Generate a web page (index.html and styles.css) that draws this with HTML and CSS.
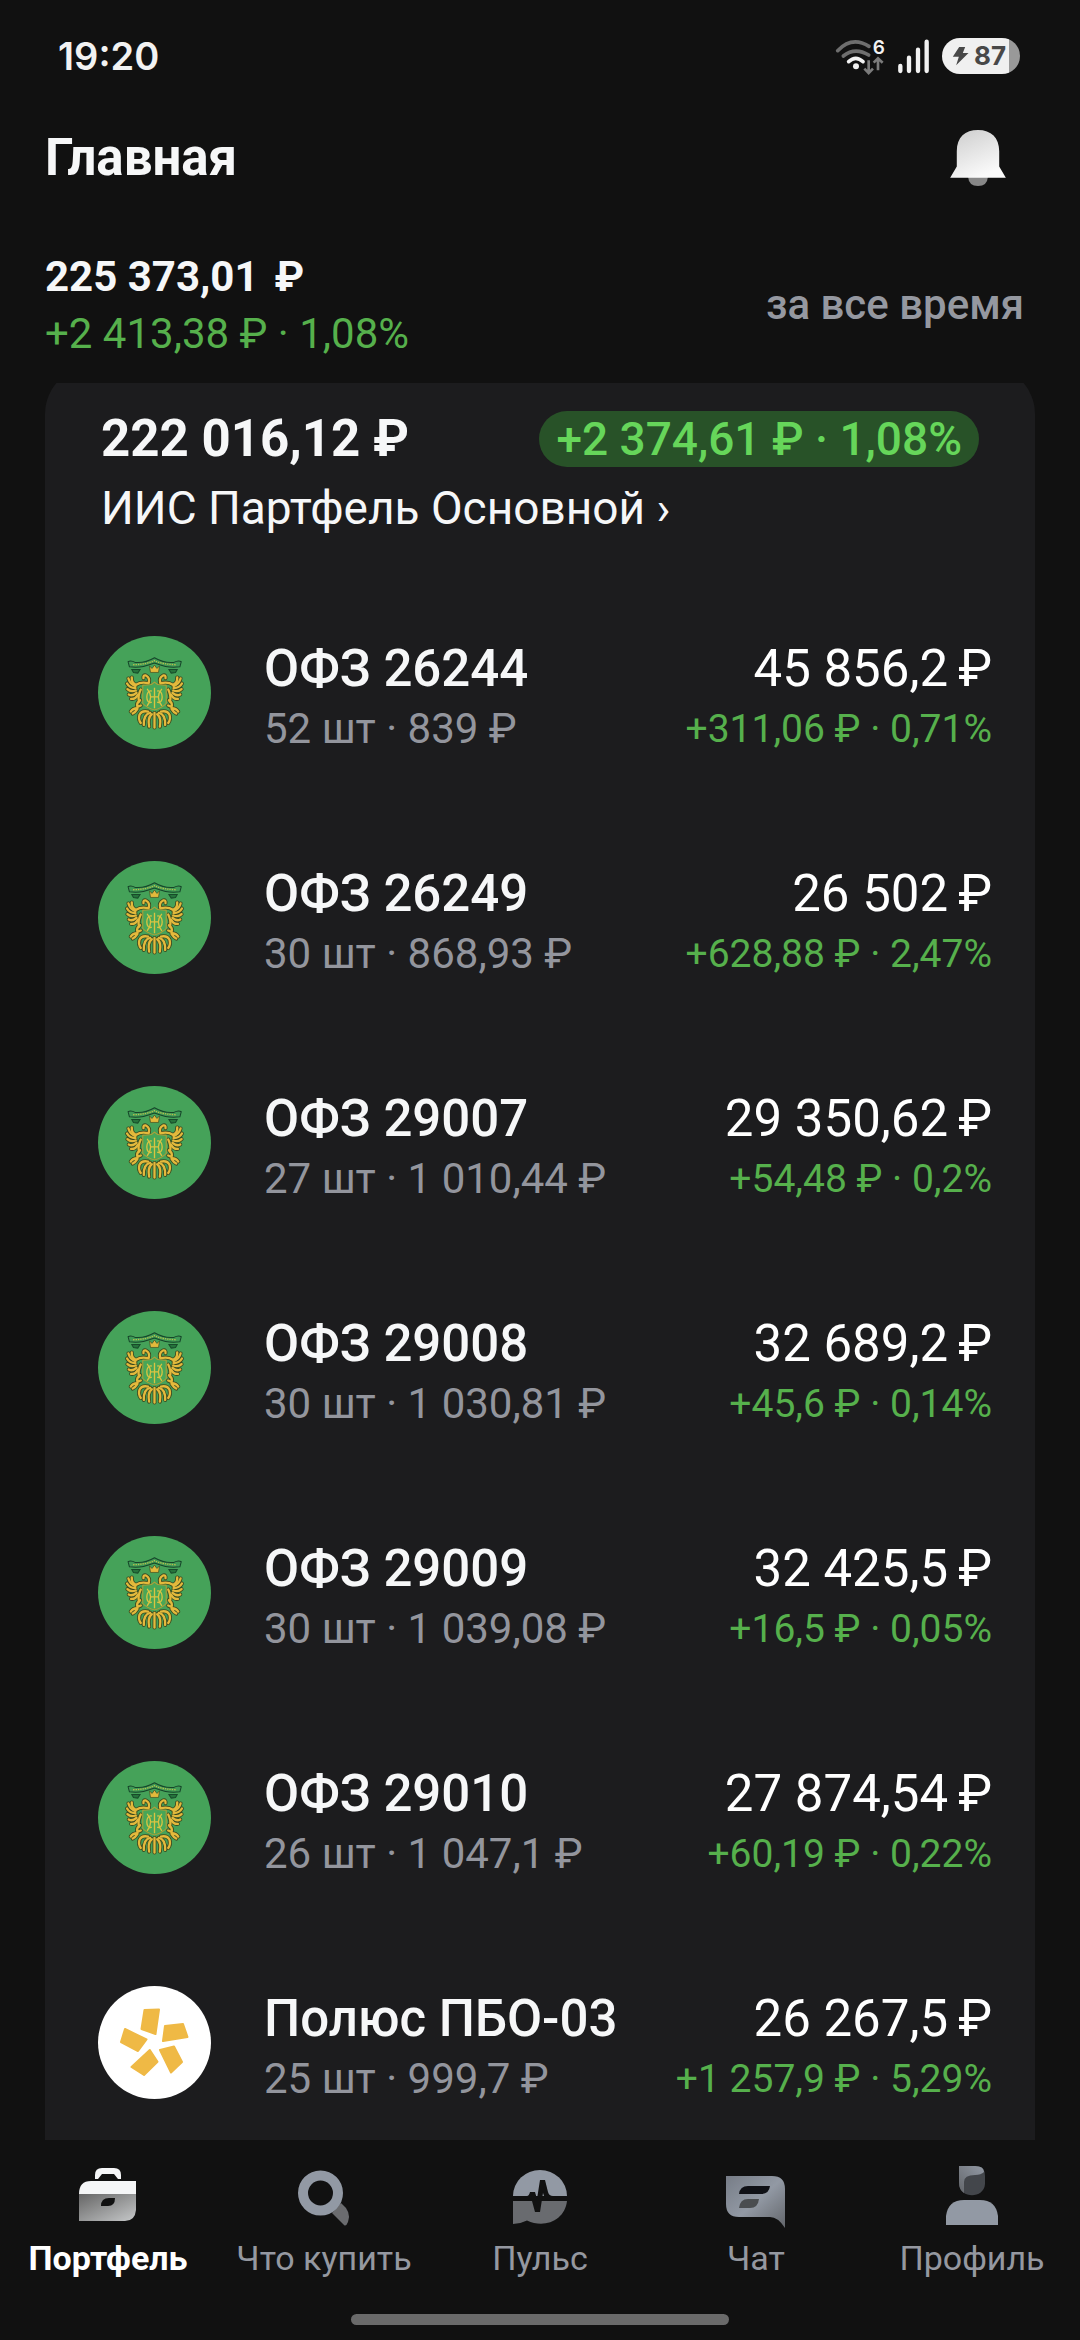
FILE: index.html
```html
<!DOCTYPE html>
<html lang="ru">
<head>
<meta charset="utf-8">
<meta name="viewport" content="width=device-width, initial-scale=1">
<title>Главная</title>
<link rel="stylesheet" href="styles.css">
</head>
<body>
<svg class="defs" aria-hidden="true">
  <symbol id="wing" viewBox="0 0 338 338" overflow="visible">
    <g fill="none" stroke-linecap="round">
      <path d="M150 141 Q128 136 114 146 Q100 142 101 124"/>
      <path d="M112 150 Q96 144 91 127"/>
      <path d="M112 156 Q94 155 87 142"/>
      <path d="M113 163 Q97 168 88 159"/>
      <path d="M115 170 Q103 181 92 175"/>
      <path d="M119 176 Q111 190 99 188"/>
      <path d="M128 160 Q118 180 123 196"/>
      <path d="M152 140 Q156 124 143 118 Q135 116 136 126"/>
      <path d="M126 192 Q114 200 118 212 L128 208"/>
      <path d="M118 216 Q104 216 98 226 M118 218 Q112 228 104 232"/>
      <path d="M150 226 Q130 222 124 236 Q120 250 128 260"/>
      <path d="M156 230 Q136 234 137 266"/>
      <path d="M161 234 Q148 244 153 271"/>
    </g>
  </symbol>
  <symbol id="emblem" viewBox="0 0 338 338">
    <circle cx="169" cy="169" r="169" fill="#45a259"/>
    <path d="M90 77 Q98 71 111 79 Q140 82 169 65 Q198 82 227 79 Q241 71 249 77 L245 92 Q222 95 202 91 Q183 87 169 81 Q154 87 136 91 Q116 95 94 92Z" fill="#3f9a55" stroke="#16452a" stroke-width="3"/>
    <path d="M105 86 Q142 85 169 74 Q195 85 234 86" fill="none" stroke="#b9bd4c" stroke-width="4" stroke-dasharray="4 3"/>
    <path d="M101 100 H126 L119 111 L106 109Z M237 100 H212 L219 111 L232 109Z" fill="#26743c" stroke="#174b2a" stroke-width="3"/>
    <g stroke="#3b4a20" stroke-width="12">
      <use href="#wing" width="338" height="338"/>
      <use href="#wing" width="338" height="338" transform="translate(338 0) scale(-1 1)"/>
      <path d="M169 230 V274" stroke-linecap="round"/>
    </g>
    <g stroke="#e3b93c" stroke-width="7">
      <use href="#wing" width="338" height="338"/>
      <use href="#wing" width="338" height="338" transform="translate(338 0) scale(-1 1)"/>
      <path d="M169 230 V274" stroke-linecap="round"/>
    </g>
    <path d="M157 109 L154 90 L162 97 L169 87 L176 97 L184 90 L181 109Z" fill="#e3b93c" stroke="#3b4a20" stroke-width="2"/>
    <path d="M134 147 L160 145 L169 138 L178 145 L204 147 V202 Q191 216 169 221 Q147 216 134 202Z" fill="#48a657" stroke="#b59e35" stroke-width="3"/>
    <g fill="none" stroke="#d8c442" stroke-width="4">
      <path d="M169 155 V216 M156 182 H182"/>
      <path d="M161 165 C141 158 141 207 161 198 M177 165 C197 158 197 207 177 198 M147 158 Q168 182 147 209 M191 158 Q170 182 191 209"/>
    </g>
  </symbol>
</svg>

<header class="status">
  <time class="clock">19:20</time>
  <div class="status-icons">
    <svg class="wifi" viewBox="110 50 150 111" aria-label="Wi-Fi">
      <g fill="none" stroke-width="11" stroke-linecap="round">
        <path d="M118 88 Q161 43 212 75" stroke="#6e6e6e"/>
        <path d="M135 104 Q170 76 211 101" stroke="#6e6e6e"/>
        <path d="M151 121 Q172 101 194 121" stroke="#f2f2f2"/>
      </g>
      <circle cx="173" cy="135" r="9" fill="#f2f2f2"/>
      <path d="M211 117 V154 M198 142 L211 155 L224 142 M239 147 V112 M226 124 L239 111 L253 124" fill="none" stroke="#7b7b7b" stroke-width="8"/>
      <text class="wifi-gen" x="223" y="98">6</text>
    </svg>
    <svg class="signal" viewBox="288 54 99 105" aria-label="Сигнал">
      <path d="M298 135 V150 M324 110 V150 M351 86 V150 M377 62 V150" stroke="#f2f2f2" stroke-width="13" stroke-linecap="round"/>
    </svg>
    <div class="battery">
      <svg class="bolt" viewBox="455 78 50 60" aria-hidden="true"><path d="M476 81 H494 L487 99 H504 L467 136 L475 110 H457Z" fill="#484848"/></svg>
      <span>87</span>
    </div>
  </div>
</header>

<section class="title-bar">
  <h1>Главная</h1>
  <button class="bell" type="button" aria-label="Уведомления">
    <svg viewBox="450 326 168 169">
      <defs><linearGradient id="bellFill" x1="0" y1="0" x2=".5" y2="1"><stop offset="0" stop-color="#ccc"/><stop offset="1" stop-color="#fafafa"/></linearGradient></defs>
      <path d="M504 467 H564 Q562 495 534 495 Q506 495 504 467Z" fill="#888"/>
      <path d="M470 390 C470 347 495 326 534 326 C574 326 598 349 598 390 V436 L618 470 H450 L470 436Z" fill="url(#bellFill)"/>
    </svg>
  </button>
</section>

<section class="summary">
  <div>
    <p class="total">225 373,01<span>₽</span></p>
    <p class="total-gain">+2 413,38 ₽ · 1,08%</p>
  </div>
  <button class="period" type="button">за все время</button>
</section>

<main class="feed">
  <article class="card">
    <header class="account">
      <div class="account-top">
        <h2>222 016,12 ₽</h2>
        <span class="pill">+2 374,61 ₽ · 1,08%</span>
      </div>
      <a class="account-name" href="#account">ИИС Партфель Основной ›</a>
    </header>
    <ul class="assets">
      <li class="asset">
        <svg class="avatar"><use href="#emblem"/></svg>
        <div class="info"><h3>ОФЗ 26244</h3><p>52 шт · 839 ₽</p></div>
        <div class="value"><strong>45 856,2<span>₽</span></strong><p>+311,06 ₽ · 0,71%</p></div>
      </li>
      <li class="asset">
        <svg class="avatar"><use href="#emblem"/></svg>
        <div class="info"><h3>ОФЗ 26249</h3><p>30 шт · 868,93 ₽</p></div>
        <div class="value"><strong>26 502<span>₽</span></strong><p>+628,88 ₽ · 2,47%</p></div>
      </li>
      <li class="asset">
        <svg class="avatar"><use href="#emblem"/></svg>
        <div class="info"><h3>ОФЗ 29007</h3><p>27 шт · 1 010,44 ₽</p></div>
        <div class="value"><strong>29 350,62<span>₽</span></strong><p>+54,48 ₽ · 0,2%</p></div>
      </li>
      <li class="asset">
        <svg class="avatar"><use href="#emblem"/></svg>
        <div class="info"><h3>ОФЗ 29008</h3><p>30 шт · 1 030,81 ₽</p></div>
        <div class="value"><strong>32 689,2<span>₽</span></strong><p>+45,6 ₽ · 0,14%</p></div>
      </li>
      <li class="asset">
        <svg class="avatar"><use href="#emblem"/></svg>
        <div class="info"><h3>ОФЗ 29009</h3><p>30 шт · 1 039,08 ₽</p></div>
        <div class="value"><strong>32 425,5<span>₽</span></strong><p>+16,5 ₽ · 0,05%</p></div>
      </li>
      <li class="asset">
        <svg class="avatar"><use href="#emblem"/></svg>
        <div class="info"><h3>ОФЗ 29010</h3><p>26 шт · 1 047,1 ₽</p></div>
        <div class="value"><strong>27 874,54<span>₽</span></strong><p>+60,19 ₽ · 0,22%</p></div>
      </li>
      <li class="asset">
        <svg class="avatar" viewBox="0 0 113 113">
          <circle cx="56.5" cy="56.5" r="56.5" fill="#fff"/>
          <path d="M46.5 24 L61 23.5 L57.5 48 L43.5 43Z M67 40 L85 38 L89.5 51 L65 55Z M27 43 L48.5 53.5 L40 65 L23 56Z M51.8 64 L59.5 75.7 L46 89 L33.5 81Z M62 64 L76 60.5 L84 76 L73 86.5Z" fill="#efb945" stroke="#efb945" stroke-width="2" stroke-linejoin="round"/>
        </svg>
        <div class="info"><h3>Полюс ПБО-03</h3><p>25 шт · 999,7 ₽</p></div>
        <div class="value"><strong>26 267,5<span>₽</span></strong><p>+1 257,9 ₽ · 5,29%</p></div>
      </li>
    </ul>
  </article>
</main>

<footer class="bottom">
  <nav class="tabs">
    <a class="tab active" href="#portfolio">
      <svg viewBox="0 0 64 64">
        <defs><linearGradient id="caseFill" x1="0" y1="0" x2="1" y2="1"><stop offset="0" stop-color="#666"/><stop offset="1" stop-color="#c6c8c9"/></linearGradient></defs>
        <path d="M19 15 V11 Q19 4 26 4 H38 Q45 4 45 11 V15 H42 L38 10 H26 L22 15Z" fill="#f5f6f7"/>
        <path d="M3 30 Q3 17 15 17 H60 V30Z" fill="#f5f6f7"/>
        <path d="M3 30 H60 V46 Q59 57 49 57 H3Z" fill="url(#caseFill)"/>
        <path d="M25 42 Q25 34 33 34 H39 Q39 42 32 42Z" fill="#111"/>
      </svg>
      <span>Портфель</span>
    </a>
    <a class="tab" href="#buy">
      <svg viewBox="0 0 64 64">
        <path d="M40 49 L49 39 Q60 48 56 58 Q54 63 52 61Z" fill="#6b6c6f"/>
        <circle cx="28.5" cy="29" r="17.5" fill="none" stroke="#9299a4" stroke-width="10"/>
      </svg>
      <span>Что купить</span>
    </a>
    <a class="tab" href="#pulse">
      <svg viewBox="0 0 64 64">
        <path d="M5 32 A27 26 0 0 1 59 32Z" fill="#9299a4"/>
        <path d="M5 37 H59 C57 56 37 65 19 56.5 Q12 60 5 60Z" fill="#696b6f"/>
        <path d="M4 32 H19 Q21 32 22 28 H27 L29 35 L32 16 H37 L40 28 Q41 32 45 32 H60 V37 H44 Q38 37 36 32 L35 29 L32 48 H27 L24 37 H4Z" fill="#111"/>
      </svg>
      <span>Пульс</span>
    </a>
    <a class="tab" href="#chat">
      <svg viewBox="0 0 64 64">
        <defs><linearGradient id="chatFill" x1="0" y1="0" x2="1" y2="1"><stop offset="0" stop-color="#777d87"/><stop offset=".5" stop-color="#9299a4"/><stop offset="1" stop-color="#63666b"/></linearGradient></defs>
        <path d="M2 12 H48 Q61 12 61 25 V64 Q54 53 46 53 H15 Q2 53 2 40Z" fill="url(#chatFill)"/>
        <path d="M15 30 Q16 22 24 22 H46 Q45 30 37 30Z" fill="#101116"/>
        <path d="M15 44 Q16 35 24 35 H35 Q34 44 26 44Z" fill="#4a4d50"/>
      </svg>
      <span>Чат</span>
    </a>
    <a class="tab" href="#profile">
      <svg viewBox="0 0 64 64">
        <defs><linearGradient id="hairFill" x1="1" y1="0" x2="0" y2="1"><stop offset="0" stop-color="#9299a4"/><stop offset="1" stop-color="#63666b"/></linearGradient></defs>
        <path d="M19 2 H35 Q45 2 45 12 V20 C44 35 20 35 19 20Z" fill="#43464b"/>
        <path d="M19 2 H35 Q44 2 44 8 Q41 11 35 11 Q24 11 24 18 V29 Q19 26 19 18Z" fill="url(#hairFill)"/>
        <path d="M6 61 V52 Q8 36 24 36 H40 Q56 36 58 52 V61Z" fill="#9299a4"/>
      </svg>
      <span>Профиль</span>
    </a>
  </nav>
  <div class="home-bar"></div>
</footer>
</body>
</html>
```
FILE: styles.css
```css
* {
  box-sizing: border-box;
}

body {
  margin: 0;
  height: 100vh;
  display: flex;
  flex-direction: column;
  background: #111;
  color: #f6f7f8;
  font-family: Roboto, sans-serif;
}

h1, h2, h3, p, ul {
  margin: 0;
  padding: 0;
  list-style: none;
}

a {
  color: inherit;
  text-decoration: none;
}

button {
  padding: 0;
  border: 0;
  background: none;
  font: inherit;
}

svg {
  display: block;
}

.defs {
  position: absolute;
  width: 0;
  height: 0;
}

/* Status bar */
.status {
  display: flex;
  justify-content: space-between;
  align-items: center;
  height: 112px;
  padding: 0 60px 0 58px;
}

.clock {
  font: 600 38px/44px Inter, sans-serif;
  color: #f2f2f2;
}

.status-icons {
  display: flex;
  align-items: center;
  gap: 12px;
}

.wifi {
  width: 50px;
  height: 37px;
  overflow: visible;
}

.wifi-gen {
  font: 600 57px Inter, sans-serif;
  fill: #f2f2f2;
}

.signal {
  width: 33px;
  height: 35px;
}

.battery {
  display: flex;
  align-items: center;
  gap: 5px;
  width: 78px;
  height: 36px;
  padding-left: 10px;
  border-radius: 18px;
  background: linear-gradient(to right, #f0f0f0 86%, #999 86%);
  color: #484848;
  font: 700 26px/36px Inter, sans-serif;
}

.bolt {
  width: 17px;
  height: 20px;
}

/* Title */
.title-bar {
  display: flex;
  justify-content: space-between;
  align-items: center;
  height: 92px;
  padding: 0 74px 0 45px;
}

h1 {
  font-size: 51px;
  line-height: 60px;
  font-weight: 700;
}

.bell svg {
  width: 56px;
  height: 56px;
}

/* Portfolio total */
.summary {
  display: flex;
  justify-content: space-between;
  align-items: center;
  padding: 44px 56px 21px 45px;
}

.total {
  font-size: 42px;
  line-height: 57px;
  font-weight: 700;
}

.total span {
  margin-left: 16px;
}

.total-gain {
  font-size: 42px;
  line-height: 57px;
  color: #56b04c;
}

.period {
  font-size: 42px;
  line-height: 50px;
  font-weight: 500;
  color: #9598a0;
}

/* Account card */
.feed {
  flex: 1;
  min-height: 0;
  overflow: hidden;
  padding: 0 45px;
}

.card {
  margin-top: -17px;
  border-radius: 48px 48px 0 0;
  background: #1c1c1e;
}

.account {
  padding: 42px 56px 0;
}

.account-top {
  display: flex;
  justify-content: space-between;
  align-items: center;
}

h2 {
  font-size: 51px;
  line-height: 62px;
  font-weight: 700;
}

.pill {
  padding: 0 17px;
  border-radius: 28px;
  background: #285228;
  color: #66d65a;
  font-size: 46px;
  line-height: 56px;
  font-weight: 500;
}

.account-name {
  display: block;
  margin-top: 10px;
  font-size: 46px;
  line-height: 56px;
}

/* Asset rows */
.assets {
  padding-top: 44px;
}

.asset {
  display: flex;
  height: 225px;
  padding: 56px 43px 0 53px;
}

.avatar {
  width: 113px;
  height: 113px;
}

.info {
  flex: 1;
  padding-left: 53px;
}

h3 {
  font-size: 51px;
  line-height: 66px;
  font-weight: 500;
}

.info p {
  font-size: 42px;
  line-height: 54px;
  color: #93959d;
}

.value {
  text-align: right;
}

.value strong {
  display: block;
  font-size: 51px;
  line-height: 66px;
  font-weight: 400;
  color: #fff;
}

.value span {
  margin-left: 10px;
}

.value p {
  font-size: 39px;
  line-height: 54px;
  color: #56b04c;
}

/* Bottom navigation */
.bottom {
  padding: 24px 0 15px;
}

.tabs {
  display: grid;
  grid-template-columns: repeat(5, 1fr);
}

.tab {
  display: flex;
  flex-direction: column;
  align-items: center;
  gap: 10px;
  color: #9598a0;
  font-size: 34px;
  line-height: 40px;
}

.tab svg {
  width: 64px;
  height: 64px;
}

.active {
  color: #fff;
  font-weight: 700;
}

.home-bar {
  width: 35%;
  height: 11px;
  margin: 36px auto 0;
  border-radius: 6px;
  background: #6a6a6a;
}
```
